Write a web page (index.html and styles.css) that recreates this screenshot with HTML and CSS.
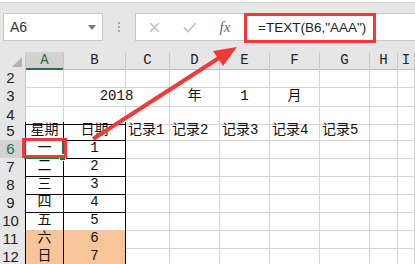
FILE: index.html
```html
<!DOCTYPE html>
<html lang="zh-CN">

<head>
    <meta charset="UTF-8">
    <title>TEXT</title>
    <link rel="stylesheet" href="styles.css">
</head>

<body>
    <div class="sheet">

        <!-- formula bar -->
        <div class="toolbar">
            <div class="namebox">
                <span class="name">A6</span>
                <span class="drop"></span>
            </div>
            <div class="grip"><i></i><i></i><i></i></div>
            <div class="formula">
                <span class="btn">
                    <svg width="11" height="11" viewBox="0 0 11 11">
                        <path d="M1 1L10 10M10 1L1 10" stroke="#c3c3c3" stroke-width="1.6" fill="none" />
                    </svg>
                </span>
                <span class="btn">
                    <svg width="14" height="11" viewBox="0 0 14 11">
                        <path d="M1 5.5L5 9.5L13 1" stroke="#c3c3c3" stroke-width="1.8" fill="none" />
                    </svg>
                </span>
                <span class="btn fx">fx</span>
                <div class="input">=TEXT(B6,"AAA")</div>
            </div>
        </div>

        <!-- grid -->
        <div class="grid">
            <div class="row hdr">
                <div class="corner"><span class="tri"></span></div>
                <div class="col sel">A</div>
                <div class="col">B</div>
                <div class="col">C</div>
                <div class="col">D</div>
                <div class="col">E</div>
                <div class="col">F</div>
                <div class="col">G</div>
                <div class="col">H</div>
                <div class="col">I</div>
            </div>

            <div class="row r2">
                <div class="rh">2</div>
                <div class="c"></div><div class="c"></div><div class="c"></div><div class="c"></div>
                <div class="c"></div><div class="c"></div><div class="c"></div><div class="c"></div><div class="c"></div>
            </div>

            <div class="row r3">
                <div class="rh">3</div>
                <div class="c"></div>
                <div class="c mid wide">2018</div>
                <div class="c mid">年</div>
                <div class="c mid">1</div>
                <div class="c mid">月</div>
                <div class="c"></div><div class="c"></div><div class="c"></div>
            </div>

            <div class="row r4">
                <div class="rh">4</div>
                <div class="c top-b"></div><div class="c top-b"></div>
                <div class="c"></div><div class="c"></div><div class="c"></div><div class="c"></div>
                <div class="c"></div><div class="c"></div><div class="c"></div>
            </div>

            <div class="row">
                <div class="rh blk">5</div>
                <div class="c b mid">星期</div>
                <div class="c b mid">日期</div>
                <div class="c">记录1</div>
                <div class="c">记录2</div>
                <div class="c">记录3</div>
                <div class="c">记录4</div>
                <div class="c">记录5</div>
                <div class="c"></div><div class="c"></div>
            </div>

            <div class="row">
                <div class="rh blk on">6</div>
                <div class="c b mid active">一<span class="selbox"></span><span class="handle"></span></div>
                <div class="c b mid">1</div>
                <div class="c"></div><div class="c"></div><div class="c"></div><div class="c"></div>
                <div class="c"></div><div class="c"></div><div class="c"></div>
            </div>

            <div class="row">
                <div class="rh blk">7</div>
                <div class="c b mid">二</div>
                <div class="c b mid">2</div>
                <div class="c"></div><div class="c"></div><div class="c"></div><div class="c"></div>
                <div class="c"></div><div class="c"></div><div class="c"></div>
            </div>

            <div class="row">
                <div class="rh blk">8</div>
                <div class="c b mid">三</div>
                <div class="c b mid">3</div>
                <div class="c"></div><div class="c"></div><div class="c"></div><div class="c"></div>
                <div class="c"></div><div class="c"></div><div class="c"></div>
            </div>

            <div class="row">
                <div class="rh blk">9</div>
                <div class="c b mid">四</div>
                <div class="c b mid">4</div>
                <div class="c"></div><div class="c"></div><div class="c"></div><div class="c"></div>
                <div class="c"></div><div class="c"></div><div class="c"></div>
            </div>

            <div class="row">
                <div class="rh blk">10</div>
                <div class="c b mid">五</div>
                <div class="c b mid">5</div>
                <div class="c"></div><div class="c"></div><div class="c"></div><div class="c"></div>
                <div class="c"></div><div class="c"></div><div class="c"></div>
            </div>

            <div class="row">
                <div class="rh blk">11</div>
                <div class="c b mid orange">六</div>
                <div class="c b mid orange">6</div>
                <div class="c"></div><div class="c"></div><div class="c"></div><div class="c"></div>
                <div class="c"></div><div class="c"></div><div class="c"></div>
            </div>

            <div class="row">
                <div class="rh blk">12</div>
                <div class="c b mid orange">日</div>
                <div class="c b mid orange">7</div>
                <div class="c"></div><div class="c"></div><div class="c"></div><div class="c"></div>
                <div class="c"></div><div class="c"></div><div class="c"></div>
            </div>
        </div>

        <!-- red marks -->
        <div class="mark mark-formula"></div>
        <div class="mark mark-cell"></div>
        <svg class="arrow" width="415" height="264" viewBox="0 0 415 264">
            <line x1="93" y1="139" x2="222" y2="56" stroke="#f03a3a" stroke-width="4" />
            <polygon points="237,47 223,66 213,51" fill="#f03a3a" />
        </svg>
    </div>
</body>

</html>
```

FILE: styles.css
```css
body {
    margin: 0;
    background: #ffffff;
    overflow: hidden;
}

.sheet {
    position: relative;
    width: 415px;
    height: 264px;
    overflow: hidden;
}

/* formula bar */
.toolbar {
    height: 49px;
    margin-top: 2px;
    border-top: 1px solid #d5d5d5;
    background: #e6e6e6;
    display: flex;
    align-items: flex-start;
    padding: 10px 0 0 3px;
    box-sizing: border-box;
    height: 50px;
}

.namebox {
    width: 100px;
    height: 28px;
    box-sizing: border-box;
    background: #fff;
    border: 1px solid #c6c6c6;
    display: flex;
    align-items: center;
    justify-content: space-between;
    padding: 0 6px 0 6px;
}

.name {
    font-family: "Liberation Sans", sans-serif;
    font-size: 14px;
    color: #333;
}

.drop {
    width: 0;
    height: 0;
    border-left: 4px solid transparent;
    border-right: 4px solid transparent;
    border-top: 5px solid #777;
}

.grip {
    width: 32px;
    height: 28px;
    display: flex;
    flex-direction: column;
    align-items: center;
    justify-content: center;
    gap: 2px;
}

.grip i {
    width: 2px;
    height: 2px;
    background: #a8a8a8;
}

.formula {
    flex: 1;
    height: 28px;
    box-sizing: border-box;
    background: #fff;
    border: 1px solid #c6c6c6;
    border-right: none;
    display: flex;
    align-items: center;
}

.btn {
    width: 36px;
    display: flex;
    justify-content: center;
    align-items: center;
}

.fx {
    width: 34px;
    font-family: "Liberation Serif", serif;
    font-style: italic;
    font-size: 15px;
    color: #666;
}

.input {
    flex: 1;
    height: 100%;
    padding-left: 16px;
    display: flex;
    align-items: center;
    font-family: "Liberation Sans", sans-serif;
    font-size: 13.5px;
    color: #222;
}

/* grid */
.row {
    display: grid;
    grid-template-columns: 26px 38px 62px 44px 50px 50px 50px 50px 28px 1fr;
    height: 18px;
}

.row.hdr {
    height: 17px;
}

.row.r3 {
    height: 19px;
}

.row.r4 {
    height: 16px;
}

.row > div {
    box-sizing: border-box;
}

.corner {
    background: #e6e6e6;
    border-right: 1px solid #c8c8c8;
    border-bottom: 1px solid #bdbdbd;
    display: flex;
    align-items: flex-end;
    justify-content: flex-end;
    padding: 0 3px 2px 0;
}

.tri {
    width: 0;
    height: 0;
    border-left: 10px solid transparent;
    border-bottom: 10px solid #b4b4b4;
}

.col {
    background: #e6e6e6;
    border-right: 1px solid #c8c8c8;
    border-bottom: 1px solid #bdbdbd;
    text-align: center;
    font-family: "Liberation Mono", monospace;
    font-size: 14px;
    line-height: 16px;
    color: #222;
}

.col.sel {
    background: #d2d2d2;
    border-bottom: 2px solid #217346;
    color: #217346;
}

.rh {
    background: #e6e6e6;
    border-right: 1px solid #c8c8c8;
    border-bottom: 1px solid #d0d0d0;
    text-align: center;
    padding-right: 4px;
    font-family: "Liberation Sans", sans-serif;
    font-size: 15px;
    line-height: 18px;
    color: #222;
}

.rh.blk {
    border-right-color: #000;
}

.rh.on {
    background: #d2d2d2;
    color: #217346;
}

.c {
    border-right: 1px solid #d4d4d4;
    border-bottom: 1px solid #d4d4d4;
    font-family: "Liberation Mono", "Noto Sans CJK SC", monospace;
    font-size: 14px;
    line-height: 17px;
    color: #111;
    padding-left: 2px;
    white-space: nowrap;
}

.c.mid {
    text-align: center;
    padding-left: 0;
}

.c.wide {
    grid-column: span 2;
}

.r3 .c {
    line-height: 19px;
}

.c.top-b {
    border-bottom-color: #000;
}

.c.b {
    border-right-color: #000;
    border-bottom-color: #000;
}

.c.orange {
    background: #f8c59b;
}

.c.active {
    position: relative;
}

.selbox {
    position: absolute;
    left: -2px;
    top: -2px;
    right: -1px;
    bottom: -1px;
    border: 2px solid #217346;
}

.handle {
    position: absolute;
    right: -3px;
    bottom: -3px;
    width: 5px;
    height: 5px;
    background: #217346;
    border: 1px solid #fff;
}

/* red marks */
.mark {
    position: absolute;
    box-sizing: border-box;
    border: 3px solid #f03a3a;
}

.mark-formula {
    left: 244px;
    top: 13px;
    width: 132px;
    height: 30px;
}

.mark-cell {
    left: 22px;
    top: 138px;
    width: 45px;
    height: 20px;
}

.arrow {
    position: absolute;
    left: 0;
    top: 0;
    pointer-events: none;
}
```
